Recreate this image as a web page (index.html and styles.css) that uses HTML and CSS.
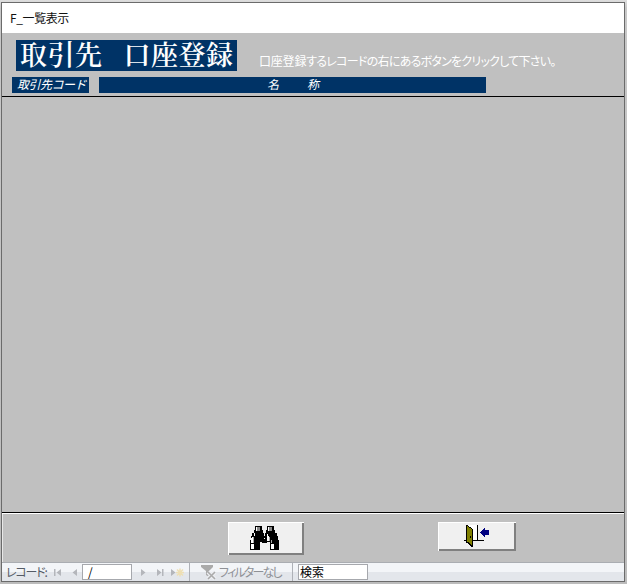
FILE: index.html
```
<!DOCTYPE html>
<html lang="ja">
<head>
<meta charset="utf-8">
<title>F_一覧表示</title>
<link rel="stylesheet" href="styles.css">
</head>
<body>
<main class="window">
  <div class="titlebar"><span>F_一覧表示</span></div>
  <header class="form-header">
    <div class="heading-row">
      <h1 class="heading"><span>取引先</span><span>口座登録</span></h1>
      <p class="hint"><span class="kanji">口座登録</span>するレコードの右にあるボタンをクリックして下さい。</p>
    </div>
    <div class="columns">
      <div class="column code"><span>取引先コード</span></div>
      <div class="column name"><span>名</span><span>称</span></div>
    </div>
  </header>
  <section class="detail"></section>
  <footer class="form-footer">
    <button class="command find" aria-label="検索">
      <svg width="29" height="24" viewBox="0 0 29 24" shape-rendering="crispEdges">
        <path fill="#000" d="M5 0h7v4h1v3h1v3h1V7h1V4h1V0h7v4h1v3h2v3h1v4h1v10h-9v-8h-3v1h-5v-1h-2v8H0V14h1v-4h1V7h2V4h1z"/>
        <path fill="#888" d="M7 1h3v4H7zM19 1h3v4h-3z"/>
        <path fill="#fff" d="M6 1h1v4H6zM18 1h1v4h-1zM4 7h1v3H4zM2 11h1v6H2zM1 12h1v5H1zM1 18h3v5H1zM17 8h1v7h-1zM18 10h1v5h-1zM21 18h3v5h-3zM14 12h1v1h-1z"/>
        <path fill="#aaa" d="M3 11h1v6H3zM19 11h1v4h-1zM21 14h1v3h-1z"/>
      </svg>
    </button>
    <button class="command exit" aria-label="閉じる">
      <svg width="25" height="23" viewBox="0 0 25 23" shape-rendering="crispEdges">
        <path fill="#fff" d="M3 0h10v15H3z"/>
        <path fill="#000" d="M13 0h1v15h6v1H9v-1h4zM0 15h3v1H0z"/>
        <path fill="#000" d="M2 0h2v1h1v1h2v1h1v1h1v18H7v-1H6v-1H5v-1H4v-1H2z"/>
        <path fill="#808000" d="M3 1h1v1h1v1h2v1h1v16H7v-1H6v-1H5v-1H3z"/>
        <path fill="#000" d="M6 11h1v2H6z"/>
        <path fill="#000080" d="M16 7h1V6h1V5h1V4h1V3h1v2h4v5h-4v2h-1v-1h-1v-1h-1V9h-1V8h-1z"/>
      </svg>
    </button>
  </footer>
  <nav class="navigator">
    <span class="record-label">レコード:</span>
    <svg class="back" width="28" height="9" viewBox="0 0 28 9"><path fill="#b4b6bb" d="M2 1h1.500v7H2zM9 1v7L4.500 4.500zM25 1v7l-4.500-3.500z"/></svg>
    <div class="field position">/</div>
    <svg class="forward" width="46" height="9" viewBox="0 0 46 9"><path fill="#b4b6bb" d="M1 1v7l4.500-3.500zM17 1v7l4.500-3.500zM22 1h1.500v7H22zM31 1v7l4.500-3.500z"/><path fill="none" stroke="#eedfb4" stroke-width="1.500" d="M36 4.500h8M40 .5v8M37 1.500l6 6M43 1.500l-6 6"/></svg>
    <div class="filter">
      <svg width="16" height="15" viewBox="0 0 16 15"><path fill="#aaa" d="M0 0h12v2L8 6v6L5 10V6L0 2z"/><path stroke="#eceef2" stroke-width="4" d="M7 7l7 7M14 7l-7 7"/><path stroke="#aaa" stroke-width="1.600" d="M7 7l7 7M14 7l-7 7"/></svg>
      <span>フィルターなし</span>
    </div>
    <div class="field search"><span>検索</span></div>
  </nav>
</main>
</body>
</html>
```
FILE: styles.css
```
* { box-sizing: border-box; }
body {
  margin: 0;
  padding: 2px 2px 2px 1px;
  height: 584px;
  overflow: hidden;
  background: linear-gradient(#dedede, #c8c8c8 8px, #bcbcbc);
  font: 12px/1 "Noto Sans CJK JP", sans-serif;
}
.window {
  display: flex;
  flex-direction: column;
  height: 580px;
  border: 1px solid #6b6b6b;
  background: #c0c0c0;
}
.titlebar {
  height: 30px;
  padding: 9px 0 0 8px;
  background: #fff;
  color: #111;
}
.titlebar span { letter-spacing: -0.4px; }
.form-header {
  height: 64px;
  padding-top: 7px;
  border-bottom: 1px solid #000;
  color: #fff;
}
.heading-row { display: flex; height: 31px; padding-left: 14px; }
.heading {
  display: flex;
  gap: 21px;
  width: 221px;
  height: 31px;
  margin: 0;
  padding-left: 4px;
  background: #036;
  font: 600 27px/28px "Noto Serif CJK JP", "Noto Sans CJK JP", serif;
  letter-spacing: 0.5px;
  white-space: nowrap;
}
.hint {
  margin: 15px 0 0 22px;
  font-size: 12px;
  font-feature-settings: "palt";
  letter-spacing: -0.74px;
  white-space: nowrap;
}
.kanji { letter-spacing: -0.2px; }
.columns { display: flex; gap: 10px; margin-top: 6px; padding-left: 10px; }
.column {
  height: 16px;
  background: #036;
  line-height: 14px;
  font-style: italic;
  white-space: nowrap;
}
.code { width: 77px; padding-left: 5px; letter-spacing: -0.5px; }
.name { display: flex; justify-content: center; gap: 28px; width: 387px; padding-left: 1px; }
.detail { flex: 1; }
.form-footer {
  display: flex;
  align-items: flex-start;
  height: 50px;
  padding: 8px 0 0 226px;
  border-top: 1px solid #000;
  box-shadow: inset 0 1px #fff, inset 1px 0 #e8e8e8;
}
.command {
  display: flex;
  margin-top: 1px;
  border: 0;
  background: #f0f0f0;
  box-shadow: inset 1px 1px #fff, inset -2px -2px #808080;
}
.find { width: 76px; height: 33px; padding: 4px 0 0 22px; }
.exit { width: 78px; height: 29px; margin-left: 134px; padding: 3px 0 0 26px; }
.navigator {
  display: flex;
  align-items: center;
  height: 19px;
  padding-left: 4px;
  border-top: 1px solid #aaadb2;
  background: linear-gradient(#f3f5f8 0 50%, #e3e6eb 50%);
  color: #555b66;
  white-space: nowrap;
}
.record-label { width: 46px; font-feature-settings: "palt"; letter-spacing: -1.2px; }
.back { margin-right: 2px; }
.field {
  height: 16px;
  border: 1px solid #a6a8ad;
  background: #fff;
  color: #000;
  line-height: 14px;
}
.position { width: 50px; padding-left: 5px; }
.forward { margin-left: 8px; }
.filter {
  display: flex;
  align-items: center;
  gap: 2px;
  width: 104px;
  height: 18px;
  margin-left: 3px;
  padding-left: 11px;
  border: solid #aeb1b7;
  border-width: 0 1px;
  color: #8f9196;
}
.filter span { font-feature-settings: "palt"; letter-spacing: -1.8px; }
.search { width: 70px; margin-left: 5px; padding-left: 1px; }
```
